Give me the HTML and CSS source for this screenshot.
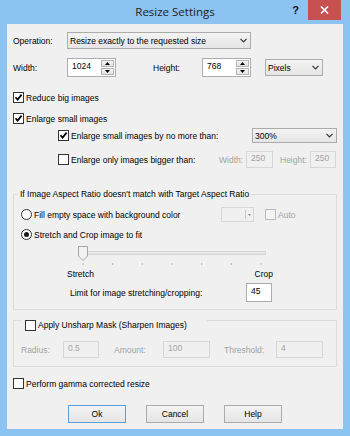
FILE: index.html
```html
<!DOCTYPE html>
<html lang="en">
<head>
    <meta charset="UTF-8">
    <title>Resize Settings</title>
    <link rel="stylesheet" href="styles.css">
</head>
<body>
<div class="window">
    <div class="titlebar">
        <span></span>
        <span class="title">Resize Settings</span>
        <div class="caption-buttons">
            <span class="help-btn">?</span>
            <span class="close-btn">
                <svg width="9" height="8" viewBox="0 0 9 8"><path d="M1 0.5 8 7.5 M8 0.5 1 7.5" stroke="#fff" stroke-width="1.6"/></svg>
            </span>
        </div>
    </div>

    <div class="client">
        <div class="row op-row">
            <span class="label label-op">Operation:</span>
            <div class="combo combo-op">
                <span>Resize exactly to the requested size</span>
                <svg class="chev" width="7" height="5" viewBox="0 0 7 5"><polyline points="0.5,0.8 3.5,3.8 6.5,0.8" fill="none" stroke="#333" stroke-width="1.2"/></svg>
            </div>
        </div>

        <div class="row size-row">
            <span class="label label-op">Width:</span>
            <div class="spin-edit">
                <span class="edit-text">1024</span>
                <div class="spin">
                    <span class="spin-btn"><svg width="5" height="3" viewBox="0 0 5 3"><path d="M0 3h5L2.5 0z"/></svg></span>
                    <span class="spin-btn"><svg width="5" height="3" viewBox="0 0 5 3"><path d="M0 0h5L2.5 3z"/></svg></span>
                </div>
            </div>
            <span class="label label-h">Height:</span>
            <div class="spin-edit">
                <span class="edit-text">768</span>
                <div class="spin">
                    <span class="spin-btn"><svg width="5" height="3" viewBox="0 0 5 3"><path d="M0 3h5L2.5 0z"/></svg></span>
                    <span class="spin-btn"><svg width="5" height="3" viewBox="0 0 5 3"><path d="M0 0h5L2.5 3z"/></svg></span>
                </div>
            </div>
            <div class="combo combo-unit">
                <span>Pixels</span>
                <svg class="chev" width="7" height="5" viewBox="0 0 7 5"><polyline points="0.5,0.8 3.5,3.8 6.5,0.8" fill="none" stroke="#333" stroke-width="1.2"/></svg>
            </div>
        </div>

        <div class="row check-row reduce-row">
            <span class="check"><svg width="9" height="9" viewBox="0 0 9 9"><path d="M1.5 4.3 3.6 6.6 7.6 1.6" fill="none" stroke="#000" stroke-width="1.7"/></svg></span>
            <span>Reduce big images</span>
        </div>

        <div class="row check-row enlarge-row">
            <span class="check"><svg width="9" height="9" viewBox="0 0 9 9"><path d="M1.5 4.3 3.6 6.6 7.6 1.6" fill="none" stroke="#000" stroke-width="1.7"/></svg></span>
            <span>Enlarge small images</span>
        </div>

        <div class="row sub-row sub-limit">
            <span class="opt sub-label-wide">
                <span class="check"><svg width="9" height="9" viewBox="0 0 9 9"><path d="M1.5 4.3 3.6 6.6 7.6 1.6" fill="none" stroke="#000" stroke-width="1.7"/></svg></span>
                <span>Enlarge small images by no more than:</span>
            </span>
            <div class="combo combo-pct">
                <span>300%</span>
                <svg class="chev" width="7" height="5" viewBox="0 0 7 5"><polyline points="0.5,0.8 3.5,3.8 6.5,0.8" fill="none" stroke="#333" stroke-width="1.2"/></svg>
            </div>
        </div>

        <div class="row sub-row sub-bigger">
            <span class="opt sub-label">
                <span class="check"></span>
                <span>Enlarge only images bigger than:</span>
            </span>
            <span class="label dim label-sw">Width:</span>
            <span class="edit dim edit-sw">250</span>
            <span class="label dim label-sh">Height:</span>
            <span class="edit dim edit-sh">250</span>
        </div>

        <fieldset class="group group-aspect">
            <legend>If Image Aspect Ratio doesn't match with Target Aspect Ratio</legend>

            <div class="row radio-row">
                <span class="opt radio-label">
                    <span class="radio"></span>
                    <span>Fill empty space with background color</span>
                </span>
                <div class="color-pick">
                    <span class="color-div"></span>
                    <svg width="3" height="2" viewBox="0 0 3 2"><path d="M0 0h3L1.5 2z" fill="#8a8a8a"/></svg>
                </div>
                <span class="check disabled auto-check"></span>
                <span class="dim auto-text">Auto</span>
            </div>

            <div class="row radio-row second">
                <span class="opt">
                    <span class="radio on"></span>
                    <span>Stretch and Crop image to fit</span>
                </span>
            </div>

            <svg class="slider" width="200" height="20" viewBox="0 0 200 20">
                <rect x="3.5" y="5.5" width="187" height="3" fill="#e7e7e7" stroke="#d4d4d4"/>
                <path d="M3.5 0.5H12.5V10L8 14.5 3.5 10Z" fill="#f2f2f2" stroke="#a5a5a5"/>
                <path d="M8 17v2M37.7 17v2M67.3 17v2M97 17v2M126.7 17v2M156.3 17v2M186 17v2" stroke="#b4b4b4"/>
            </svg>

            <div class="slider-labels">
                <span>Stretch</span>
                <span>Crop</span>
            </div>

            <div class="row limit-row">
                <span class="label label-limit">Limit for image stretching/cropping:</span>
                <span class="edit edit-limit">45</span>
            </div>
        </fieldset>

        <fieldset class="group group-sharpen">
            <legend>
                <span class="check"></span>
                <span>Apply Unsharp Mask (Sharpen Images)</span>
            </legend>
            <div class="row sharpen-row">
                <span class="label dim label-radius">Radius:</span>
                <span class="edit dim edit-radius">0.5</span>
                <span class="label dim label-amount">Amount:</span>
                <span class="edit dim edit-amount">100</span>
                <span class="label dim label-threshold">Threshold:</span>
                <span class="edit dim edit-amount">4</span>
            </div>
        </fieldset>

        <div class="row check-row gamma-row">
            <span class="check"></span>
            <span>Perform gamma corrected resize</span>
        </div>

        <div class="buttons">
            <span class="btn default">Ok</span>
            <span class="btn">Cancel</span>
            <span class="btn">Help</span>
        </div>
    </div>
</div>
</body>
</html>
```

FILE: styles.css
```css
* {
    box-sizing: border-box;
}

body {
    margin: 0;
    width: 350px;
    height: 436px;
    overflow: hidden;
    font-family: "Liberation Sans", Arial, sans-serif;
    font-size: 8.5px;
    line-height: 12px;
    color: #000;
    background: #8dc3f1;
}

.window {
    height: 436px;
    display: flex;
    flex-direction: column;
    padding: 0 7px 7px;
    background: #8dc3f1;
}

.titlebar {
    height: 24px;
    flex: none;
    display: grid;
    grid-template-columns: 1fr auto 1fr;
}

.title {
    font-family: "Open Sans", "Liberation Sans", sans-serif;
    font-size: 11.5px;
    line-height: 24px;
    color: #222;
}

.caption-buttons {
    display: flex;
    justify-content: flex-end;
    align-items: flex-start;
    margin-right: 2px;
}

.help-btn {
    font-weight: bold;
    font-size: 11px;
    line-height: 20px;
    margin-right: 9px;
    color: #111;
}

.close-btn {
    width: 33px;
    height: 20px;
    background: #c75050;
    display: flex;
    align-items: center;
    justify-content: center;
}

.client {
    flex: 1;
    background: #f0f0f0;
    padding: 8px 6px 0;
    display: flex;
    flex-direction: column;
}

.row {
    display: flex;
    align-items: center;
}

.dim {
    color: #a3a3a3;
}

/* combo boxes */
.combo {
    height: 17px;
    border: 1px solid #acacac;
    background: linear-gradient(#f3f3f3, #e5e5e5);
    display: flex;
    align-items: center;
    justify-content: space-between;
    padding: 0 3px 0 2px;
}

.combo-op {
    width: 184px;
}

.combo-unit {
    width: 58px;
    margin-left: 14px;
}

.combo-pct {
    width: 85px;
    height: 15px;
}

/* edit boxes */
.spin-edit {
    width: 49px;
    height: 19px;
    border: 1px solid #abadb3;
    background: #fff;
    display: flex;
}

.edit-text {
    flex: 1;
    padding-left: 4px;
    line-height: 15px;
}

.spin {
    width: 14px;
    display: flex;
    flex-direction: column;
    gap: 1px;
    padding: 1px 1px 1px 0;
}

.spin-btn {
    flex: 1;
    border: 1px solid #b4b4b4;
    background: linear-gradient(#f3f3f3, #e3e3e3);
    display: flex;
    align-items: center;
    justify-content: center;
}

.edit {
    height: 17px;
    border: 1px solid #abadb3;
    background: #fff;
    padding-left: 4px;
    line-height: 13px;
}

.edit.dim {
    border-color: #d7d7d7;
    background: #f0f0f0;
}

/* top rows */
.op-row {
    height: 17px;
}

.label-op {
    width: 54px;
}

.size-row {
    height: 19px;
    margin-top: 9px;
}

.label-h {
    width: 49px;
    margin-left: 37px;
}

.check-row {
    height: 13px;
    gap: 2px;
}

.reduce-row {
    margin-top: 14px;
}

.enlarge-row {
    margin-top: 8px;
}

.sub-row {
    margin-left: 45px;
}

.sub-limit {
    height: 15px;
    margin-top: 3px;
}

.sub-bigger {
    height: 17px;
    margin-top: 8px;
}

.opt {
    display: flex;
    align-items: center;
    gap: 2px;
}

.sub-label-wide {
    width: 194px;
}

.sub-label {
    width: 161px;
}

.label-sw {
    width: 27px;
}

.edit-sw {
    width: 27px;
}

.label-sh {
    width: 30px;
    margin-left: 7px;
}

.edit-sh {
    width: 26px;
}

/* check boxes and radios */
.check {
    width: 11px;
    height: 11px;
    flex: none;
    border: 1px solid #333;
    background: #fff;
    display: flex;
    align-items: center;
    justify-content: center;
}

.check.disabled {
    border-color: #bcbcbc;
    background: #f4f4f4;
}

.radio {
    width: 11px;
    height: 11px;
    flex: none;
    border: 1px solid #333;
    border-radius: 50%;
    background: #fff;
    display: flex;
    align-items: center;
    justify-content: center;
}

.radio.on::after {
    content: "";
    width: 5px;
    height: 5px;
    border-radius: 50%;
    background: #1a1a1a;
}

/* group boxes */
.group {
    margin: 0;
    min-width: 0;
    border: 1px solid #dcdcdc;
    padding: 7px 7px 7px;
}

.group legend {
    padding: 0 2px;
    margin-left: -3px;
    line-height: 12px;
}

.group-aspect {
    margin-top: 20px;
}

.radio-row {
    height: 15px;
}

.radio-row.second {
    margin-top: 5px;
}

.radio-label {
    width: 200px;
}

.color-pick {
    width: 33px;
    height: 15px;
    border: 1px solid #d7d7d7;
    display: flex;
    align-items: center;
    justify-content: flex-end;
    padding-right: 2px;
}

.color-div {
    width: 1px;
    height: 9px;
    background: #c4c4c4;
    margin-right: 2px;
}

.auto-check {
    margin-left: 11px;
}

.auto-text {
    margin-left: 2px;
}

.slider {
    display: block;
    margin-top: 4px;
    margin-left: 54px;
}

.slider-labels {
    width: 206px;
    height: 12px;
    margin-top: 2px;
    margin-left: 46px;
    display: flex;
    justify-content: space-between;
}

.limit-row {
    height: 19px;
    margin-top: 3px;
    margin-left: 49px;
}

.label-limit {
    width: 176px;
}

.edit-limit {
    width: 26px;
    height: 19px;
    line-height: 15px;
}

.group-sharpen {
    padding: 10px 7px 8px;
}

.group-sharpen legend {
    display: flex;
    align-items: center;
    gap: 2px;
    margin-left: 0;
    padding: 9px 20px 0 4px;
}

.sharpen-row {
    height: 17px;
}

.label-radius {
    width: 42px;
}

.edit-radius {
    width: 36px;
}

.label-amount {
    width: 49px;
    margin-left: 15px;
}

.edit-amount {
    width: 47px;
}

.label-threshold {
    width: 52px;
    margin-left: 14px;
}

.gamma-row {
    margin-top: 10px;
}

/* dialog buttons */
.buttons {
    display: flex;
    justify-content: center;
    gap: 20px;
    margin-top: 15px;
}

.btn {
    width: 58px;
    height: 18px;
    border: 1px solid #acacac;
    background: linear-gradient(#f3f3f3, #e5e5e5);
    display: flex;
    align-items: center;
    justify-content: center;
}

.btn.default {
    border-color: #5aa0dc;
}
```
